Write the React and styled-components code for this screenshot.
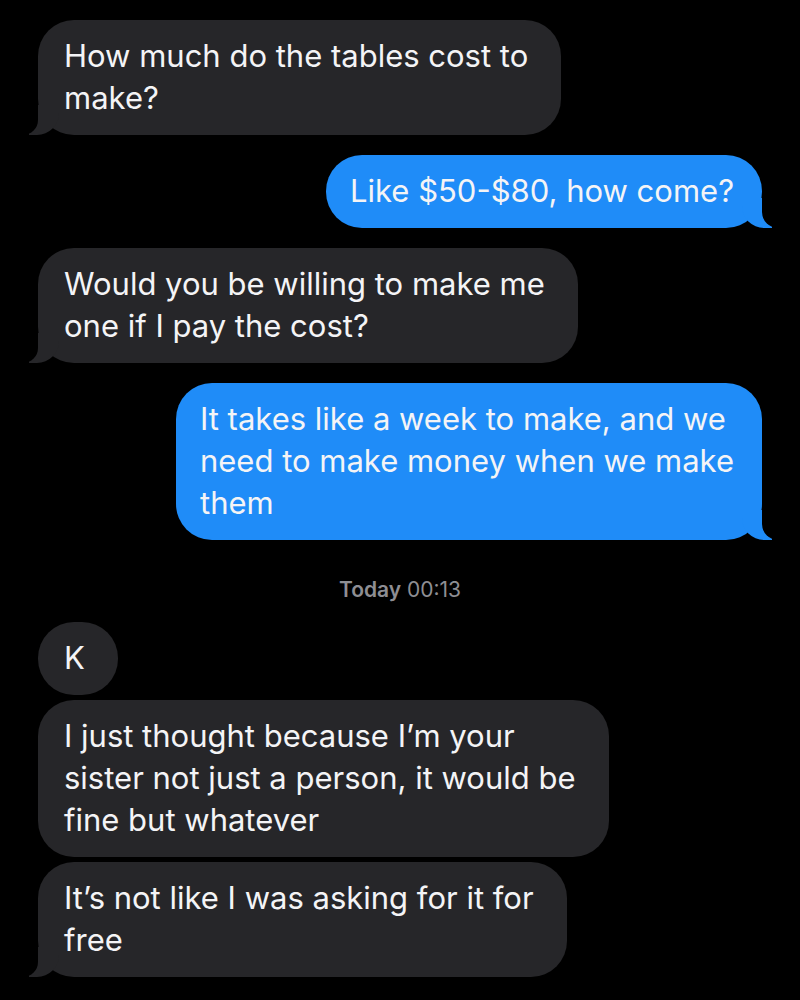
import React from "react";
import styled, { createGlobalStyle, css } from "styled-components";

const GRAY = "#262629";
const BLUE = "#1f8cf8";
const BG = "#000000";

const GlobalStyle = createGlobalStyle`
  html, body {
    margin: 0;
    padding: 0;
    background: ${BG};
  }
  body {
    font-family: Inter, "Liberation Sans", Arial, sans-serif;
    -webkit-font-smoothing: antialiased;
  }
`;

const Thread = styled.div`
  width: 800px;
  height: 1000px;
  box-sizing: border-box;
  padding: 20px 38px 0;
  display: flex;
  flex-direction: column;
  overflow: hidden;
  background: ${BG};
`;

const Group = styled.div`
  display: flex;
  flex-direction: column;
  align-items: ${(p) => (p.$me ? "flex-end" : "flex-start")};
  gap: 5px;
  margin-bottom: 20px;
`;

const tailLeft = css`
  &::before {
    content: "";
    position: absolute;
    bottom: 0;
    left: -9px;
    width: 30px;
    height: 30px;
    background: ${GRAY};
    border-bottom-right-radius: 22px;
  }
  &::after {
    content: "";
    position: absolute;
    bottom: 0;
    left: -15px;
    width: 15px;
    height: 30px;
    background: ${BG};
    border-bottom-right-radius: 15px;
  }
`;

const tailRight = css`
  &::before {
    content: "";
    position: absolute;
    bottom: 0;
    right: -10px;
    width: 30px;
    height: 30px;
    background: ${BLUE};
    border-bottom-left-radius: 22px;
  }
  &::after {
    content: "";
    position: absolute;
    bottom: 0;
    right: -16px;
    width: 16px;
    height: 30px;
    background: ${BG};
    border-bottom-left-radius: 16px;
  }
`;

const Bubble = styled.div`
  position: relative;
  box-sizing: border-box;
  min-width: 80px;
  padding: ${(p) => (p.$me ? "15px 28px 16px 24px" : "15px 33px 16px 26px")};
  border-radius: 36px;
  font-size: 31px;
  line-height: 42px;
  color: #f4f4f6;
  white-space: nowrap;
  background: ${(p) => (p.$me ? BLUE : GRAY)};
  ${(p) => p.$tail && (p.$me ? tailRight : tailLeft)}

  span {
    position: relative;
    z-index: 1;
  }
`;

const Stamp = styled.div`
  align-self: center;
  margin: 18px 0 20px;
  font-size: 21px;
  line-height: 24px;
  color: #8e8e93;

  b {
    font-weight: 600;
  }
`;

const Lines = ({ lines }) => (
  <span>
    {lines.map((l, i) => (
      <React.Fragment key={i}>
        {i > 0 && <br />}
        {l}
      </React.Fragment>
    ))}
  </span>
);

const thread = [
  { me: false, msgs: [["How much do the tables cost to", "make?"]] },
  { me: true, msgs: [["Like $50-$80, how come?"]] },
  { me: false, msgs: [["Would you be willing to make me", "one if I pay the cost?"]] },
  {
    me: true,
    msgs: [["It takes like a week to make, and we", "need to make money when we make", "them"]],
  },
  { stamp: true },
  {
    me: false,
    msgs: [
      ["K"],
      ["I just thought because I\u2019m your", "sister not just a person, it would be", "fine but whatever"],
      ["It\u2019s not like I was asking for it for", "free"],
    ],
  },
];

export default function App() {
  return (
    <>
      <GlobalStyle />
      <Thread>
        {thread.map((g, gi) =>
          g.stamp ? (
            <Stamp key={gi}>
              <b>Today</b> 00:13
            </Stamp>
          ) : (
            <Group key={gi} $me={g.me}>
              {g.msgs.map((m, mi) => (
                <Bubble key={mi} $me={g.me} $tail={mi === g.msgs.length - 1}>
                  <Lines lines={m} />
                </Bubble>
              ))}
            </Group>
          )
        )}
      </Thread>
    </>
  );
}
